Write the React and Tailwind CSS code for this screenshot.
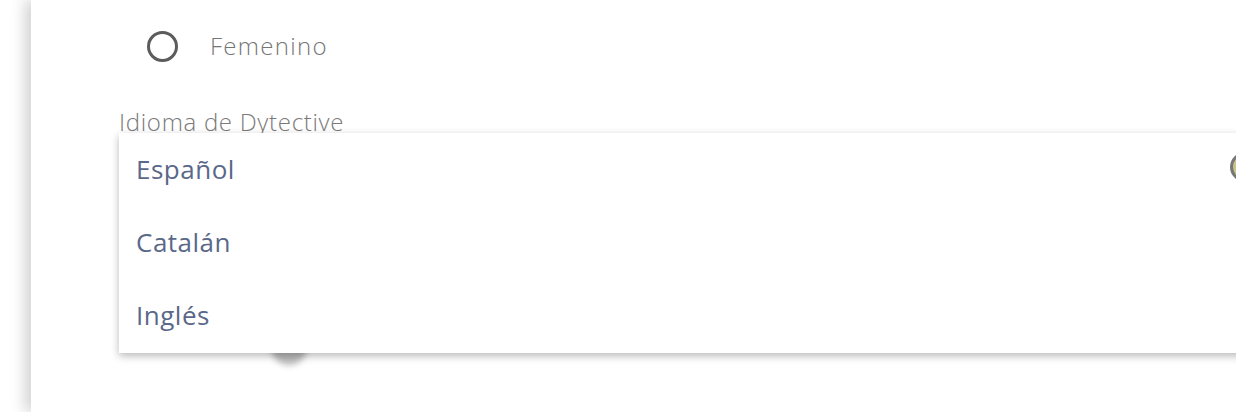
export default function App() {
  const font = { fontFamily: '"Open Sans", "Noto Sans", sans-serif' };
  return (
    <div className="w-[1236px] h-[412px] bg-white overflow-hidden relative" style={font}>
      <div className="absolute left-[31px] top-0 w-[1300px] h-[412px] bg-white shadow-[-6px_0_14px_rgba(0,0,0,0.18)]">
        <div className="flex flex-col">
          <div className="flex items-center h-[92px] pl-[116px]">
            <div className="w-[31px] h-[31px] rounded-full border-[3.5px] border-[#5c5c5c]" />
            <span className="ml-[32px] text-[24px] font-light text-[#767676] tracking-[1.3px]">Femenino</span>
          </div>
          <div className="pl-[88px] pt-[16px] h-[41px]">
            <span className="block text-[24px] font-light text-[#7a7a7a] leading-[28px] tracking-[0.7px]">Idioma de Dytective</span>
          </div>
          <div className="relative z-10 pl-[88px]">
            <div className="absolute left-[240px] top-[196px] w-[36px] h-[36px] rounded-full bg-[#bbb] blur-[3px]" />
            <div className="relative w-[1200px] h-[220px] bg-white shadow-[0_3px_8px_rgba(0,0,0,0.28)] flex flex-col">
              {["Español", "Catalán", "Inglés"].map((t) => (
                <div key={t} className="h-[73px] flex items-center pl-[17px] text-[26px] font-normal text-[#5a6889] tracking-[0.5px]">
                  {t}
                </div>
              ))}
            </div>
          </div>
        </div>
      </div>
      <div className="absolute left-[1230px] top-[152px] z-20 w-[30px] h-[30px] rounded-full border-[3px] border-[#777] bg-[#c9c48a]" />
    </div>
  );
}
